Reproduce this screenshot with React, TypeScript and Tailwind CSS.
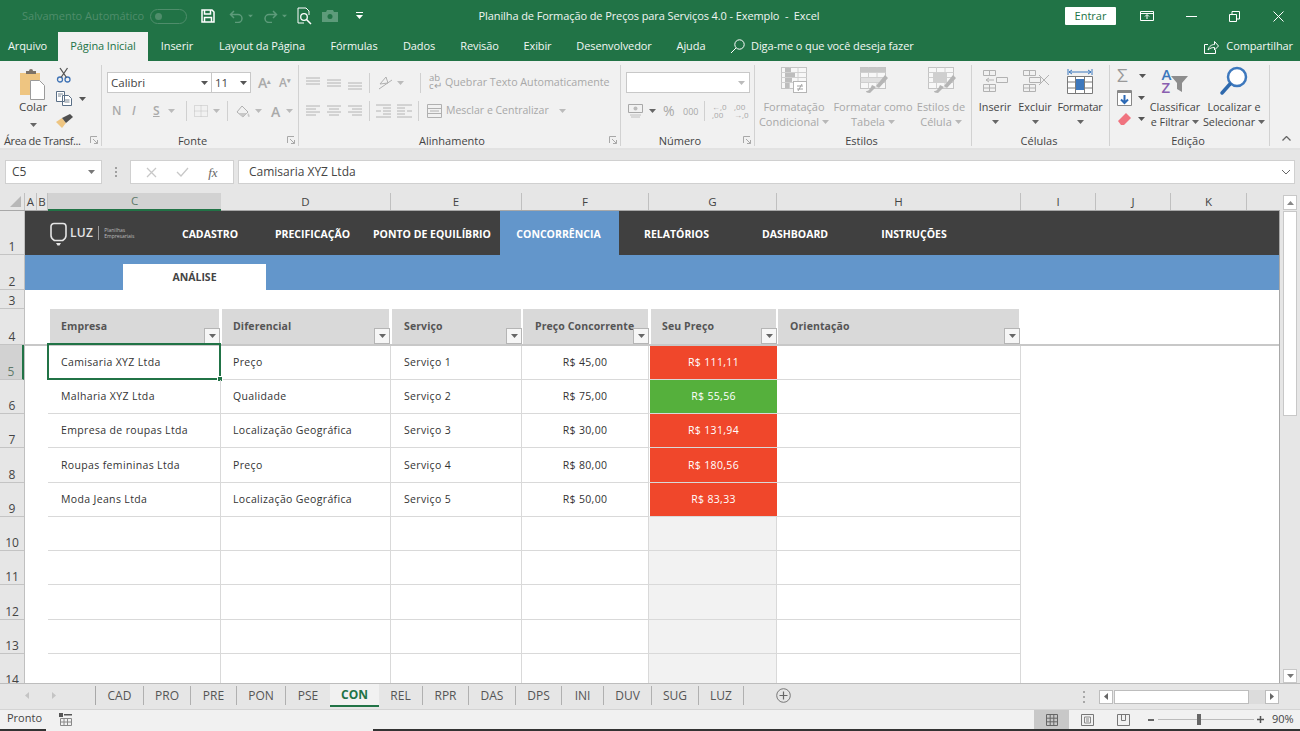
import React from "react";

const G = "#b4b4b4";
const Caret = ({ c = "#8a8a8a", className = "" }: { c?: string; className?: string }) => (
  <svg width="7" height="4" viewBox="0 0 7 4" className={className}><path d="M0 0h7L3.5 4z" fill={c} /></svg>
);
const Launcher = () => (
  <svg width="8" height="8" viewBox="0 0 8 8" className="shrink-0"><path d="M.5 7V.5H7M7.5 7.5L3 3M7.5 4v3.5H4" fill="none" stroke="#a8a8a8" /></svg>
);
const VSep = ({ h = "h-[20px]" }: { h?: string }) => <div className={`w-px bg-[#d0d0d0] ${h}`} />;

const Lines = ({ rows, c = G }: { rows: number[][]; c?: string }) => (
  <svg width="15" height="14" viewBox="0 0 15 14">
    {rows.map((r, i) => <path key={i} d={`M${r[0]} ${r[2]}H${r[1]}`} stroke={c} strokeWidth="1" />)}
  </svg>
);

const TableIcon = ({ accent }: { accent: "cond" | "table" | "style" }) => (
  <svg width="32" height="28" viewBox="0 0 32 28">
    <rect x="3.5" y="1.5" width="25" height="21" fill="#f7f7f7" stroke="#c4c4c4" />
    <path d="M3.5 6.5h25M3.5 11.5h25M3.5 16.5h25M11.5 1.5v21M20 1.5v21" stroke="#d0d0d0" />
    {accent === "cond" && (
      <>
        <path d="M7 2h6v4h-6zM7 7h10v4H7zM7 12h7v4H7zM7 17h4v5H7z" fill="#bdbdbd" />
        <rect x="15.5" y="15.5" width="13" height="11" fill="#fff" stroke="#b5b5b5" />
        <path d="M19 20h6M19 23h6M24 18l-4 7" stroke="#a2a2a2" />
      </>
    )}
    {accent === "table" && (
      <>
        <path d="M4 2h24v4H4z" fill="#c6c6c6" />
        <path d="M4 12h24v4H4z" fill="#e0e0e0" />
        <path d="M31 12l-9 10-3-2 9-11zM19 21l-6 6c-3 0-4-1-4-2 3 0 4-2 6-6z" fill="#b5b5b5" />
      </>
    )}
    {accent === "style" && (
      <>
        <path d="M8 7h14v10H8z" fill="#cfcfcf" />
        <path d="M31 12l-9 10-3-2 9-11zM19 21l-6 6c-3 0-4-1-4-2 3 0 4-2 6-6z" fill="#b5b5b5" />
      </>
    )}
  </svg>
);

const Group = ({ w, label, launcher, children, labelClass = "" }: { w: string; label: string; launcher?: boolean; children: React.ReactNode; labelClass?: string }) => (
  <div className={`${w} shrink-0 h-[81px] border-r border-[#d2d2d2] flex flex-col`}>
    <div className="h-[69px] flex">{children}</div>
    <div className="flex-1 flex items-center justify-between pr-[3px]">
      <span className={`text-[11px] text-[#444] leading-none flex-1 text-center ${labelClass}`}>{label}</span>
      {launcher && <Launcher />}
    </div>
  </div>
);

const BigBtn = ({ w, icon, l1, l2, muted }: { w: string; icon: React.ReactNode; l1: string; l2: string; muted?: boolean }) => (
  <div className={`${w} flex flex-col items-center shrink-0 ${muted ? "text-[#a8a8a8]" : "text-[#444]"}`}>
    <div className="h-[34px] pt-[1px] flex items-start justify-center">{icon}</div>
    <div className="text-[11px] leading-[15px] whitespace-nowrap">{l1}</div>
    <div className="text-[11px] leading-[15px] whitespace-nowrap flex items-center justify-center gap-[3px] h-[15px]">
      {l2}<Caret c={muted ? "#b8b8b8" : "#666"} />
    </div>
  </div>
);

const Ribbon = () => (
  <div className="h-[89px] bg-[#f1f1f1] border-b-2 border-[#e2e2e2] flex pt-[4px] shrink-0">
    <Group w="w-[102px]" label="Área de Transf..." launcher labelClass="text-left pl-[4px] tracking-[-0.4px]">
      <div className="w-[56px] flex flex-col items-center text-[#444] pl-[10px]">
        <svg width="30" height="32" viewBox="0 0 30 32" className="mt-[3px]">
          <path d="M2 5h20v22H2z" fill="#eec581" />
          <path d="M8 5V3h3a2 2 0 0 1 4 0h3v3H8z" fill="#7b7166" />
          <path d="M12.5 12.5h9l5 5v14h-14z" fill="#fff" stroke="#9b9b9b" />
        </svg>
        <div className="text-[11.5px] leading-none mt-[1px]">Colar</div>
        <Caret c="#666" className="mt-[10px]" />
      </div>
      <div className="flex flex-col pt-[2px] gap-[8px]">
        <svg width="16" height="16" viewBox="0 0 16 16">
          <circle cx="4" cy="12.5" r="2.5" fill="none" stroke="#3f73b5" strokeWidth="1.3" />
          <circle cx="11.5" cy="12.5" r="2.5" fill="none" stroke="#3f73b5" strokeWidth="1.3" />
          <path d="M5 10.5L11.5 1M10.5 10.5L4 1" stroke="#555" strokeWidth="1.3" />
        </svg>
        <div className="flex items-center gap-[7px]">
          <svg width="16" height="15" viewBox="0 0 16 15" fill="#fff" stroke="#5a6f86">
            <path d="M.5.5h8v10h-8zM6.5 4.5h6l3 3v7h-9z" />
            <path d="M2 3h5M2 5h3M8.500 9h5M8.500 11h5" stroke="#7b8794" />
          </svg>
          <Caret c="#555" />
        </div>
        <svg width="17" height="15" viewBox="0 0 17 15">
          <path d="M0 8l6 6 4-5-4-5z" fill="#eec581" />
          <path d="M6 4l4 5 7-6-3-3z" fill="#4f4f4f" />
        </svg>
      </div>
    </Group>

    <Group w="w-[197px]" label="Fonte" launcher labelClass="pr-[4px]">
      <div className="flex flex-col pl-[5px] pt-[7px]">
        <div className="flex items-center h-[21px]">
          <div className="w-[105px] h-full bg-white border border-[#c8c8c8] flex items-center justify-between px-[3px] text-[11.5px] text-[#444]">Calibri<Caret c="#555" /></div>
          <div className="w-[39px] h-full bg-white border border-l-0 border-[#c8c8c8] flex items-center justify-between px-[3px] text-[11.5px] text-[#444]">11<Caret c="#555" /></div>
          <span className="ml-[7px] w-[21px] text-[14px] leading-none text-[#aaa] font-semibold">A<sup className="text-[7px]">▴</sup></span>
          <span className="w-[18px] text-[12px] leading-none text-[#aaa] font-semibold">A<sup className="text-[7px]">▾</sup></span>
        </div>
        <div className="flex items-center h-[22px] mt-[7px] pl-[5px] text-[#aaa] font-semibold">
          <span className="w-[20px] text-[12px]">N</span>
          <span className="w-[21px] text-[12px] italic">I</span>
          <span className="w-[15px] text-[12px] underline">S</span>
          <Caret c="#bbb" />
          <div className="w-[11px]" /><VSep />
          <svg width="16" height="14" viewBox="0 0 16 14" className="ml-[6px]"><path d="M1.500 1.500h13v11h-13zM8 1.500v11M1.500 7h13" fill="none" stroke="#c0c0c0" strokeDasharray="1 1" /></svg>
          <Caret c="#bbb" className="ml-[4px]" />
          <div className="w-[7px]" /><VSep />
          <svg width="16" height="15" viewBox="0 0 16 15" className="ml-[7px]"><path d="M2 8l5-6 6 6-5 5z" fill="none" stroke="#b0b0b0" /><path d="M13 9c2 2 2 4 1 4s-2-2-1-4zM3 9h9l-4 4z" fill="#c8c8c8" /></svg>
          <Caret c="#bbb" className="ml-[4px]" />
          <span className="ml-[9px] w-[14px] text-[14px]">A</span>
          <Caret c="#bbb" className="ml-[1px]" />
        </div>
      </div>
    </Group>

    <Group w="w-[322px]" label="Alinhamento" launcher labelClass="pr-[4px]">
      <div className="flex flex-col pl-[7px] pt-[7px]">
        <div className="flex items-center h-[21px] gap-[6px]">
          <Lines rows={[[0, 14, 2], [0, 14, 5], [0, 14, 8]]} />
          <Lines rows={[[0, 14, 4], [0, 14, 7], [0, 14, 10]]} />
          <Lines rows={[[0, 14, 7], [0, 14, 10], [0, 14, 13]]} />
          <VSep />
          <svg width="16" height="15" viewBox="0 0 16 15" className="ml-[1px]"><path d="M3 9l6-7 2 6zM2 14L15 5" fill="none" stroke="#b0b0b0" /></svg>
          <Caret c="#bbb" className="ml-[-2px]" />
          <div className="w-[4px]" /><VSep />
          <div className="flex items-center gap-[3px] ml-[2px]">
            <span className="text-[9.5px] leading-[8px] text-[#a0a0a0] w-[13px] whitespace-nowrap">ab<br />c↵</span>
            <span className="text-[10.7px] text-[#a8a8a8] whitespace-nowrap">Quebrar Texto Automaticamente</span>
          </div>
        </div>
        <div className="flex items-center h-[22px] mt-[7px] gap-[6px]">
          <Lines rows={[[0, 14, 2], [0, 10, 5], [0, 14, 8], [0, 10, 11]]} />
          <Lines rows={[[0, 14, 2], [2, 12, 5], [0, 14, 8], [2, 12, 11]]} />
          <Lines rows={[[0, 14, 2], [4, 14, 5], [0, 14, 8], [4, 14, 11]]} />
          <VSep />
          <Lines rows={[[0, 15, 1], [7, 15, 4], [0, 5, 7], [7, 15, 7], [7, 15, 10], [0, 15, 13]]} />
          <Lines rows={[[0, 15, 1], [0, 8, 4], [0, 8, 7], [10, 15, 7], [0, 8, 10], [0, 15, 13]]} />
          <VSep />
          <div className="flex items-center gap-[4px] ml-[2px]">
            <svg width="15" height="14" viewBox="0 0 15 14"><path d="M.5.500h14v13H.5zM.5 4.500h14M.5 9.500h14M3 7h9" fill="none" stroke="#b0b0b0" /></svg>
            <span className="text-[10.5px] text-[#a8a8a8] whitespace-nowrap">Mesclar e Centralizar</span>
            <Caret c="#bbb" className="ml-[6px]" />
          </div>
        </div>
      </div>
    </Group>

    <Group w="w-[134px]" label="Número" launcher labelClass="pr-[4px]">
      <div className="flex flex-col pl-[5px] pt-[7px]">
        <div className="w-[124px] h-[21px] bg-white border border-[#c8c8c8] flex items-center justify-end px-[4px]"><Caret c="#bbb" /></div>
        <div className="flex items-center h-[22px] mt-[7px] pl-[2px] text-[#a8a8a8]">
          <svg width="16" height="14" viewBox="0 0 16 14"><path d="M.5.500h14v8H.5z" fill="none" stroke="#a8a8a8" /><circle cx="7.500" cy="4.500" r="2" fill="#bbb" /><path d="M2 11h11M3 13h9" stroke="#c0c0c0" /></svg>
          <Caret c="#666" className="ml-[5px]" />
          <span className="ml-[7px] text-[14px] w-[20px] leading-none">%</span>
          <span className="text-[9px] w-[20px] leading-none">000</span>
          <div className="w-[1px]" /><VSep />
          <span className="ml-[7px] text-[8px] leading-[8px] w-[22px] whitespace-nowrap">←,0<br />,00</span>
          <span className="text-[8px] leading-[8px] w-[14px] whitespace-nowrap">,00<br />→,0</span>
        </div>
      </div>
    </Group>

    <Group w="w-[217px]" label="Estilos">
      <BigBtn muted w="w-[78px]" icon={<TableIcon accent="cond" />} l1="Formatação" l2="Condicional" />
      <BigBtn muted w="w-[80px]" icon={<TableIcon accent="table" />} l1="Formatar como" l2="Tabela" />
      <BigBtn muted w="w-[56px]" icon={<TableIcon accent="style" />} l1="Estilos de" l2="Célula" />
    </Group>

    <Group w="w-[138px]" label="Células">
      <div className="w-[4px]" />
      {[
        { w: "w-[38px]", l: "Inserir", d: "M2.500 1.500h12v5h-12zM8.500 1.500v5M2.500 15.500h12v7h-12zM8.500 15.500v7M2.500 19h12M5 11h8M5 11l3-2M5 11l3 2M15.500 8.500h11v5h-11z" },
        { w: "w-[42px]", l: "Excluir", d: "M2.500 1.500h12v5h-12zM8.500 1.500v5M2.500 15.500h12v7h-12zM8.500 15.500v7M2.500 19h12M8.500 8.500h11v5h-11zM18 6l10 10M28 6L18 16" },
      ].map((b) => (
        <div key={b.l} className={`${b.w} flex flex-col items-center shrink-0 text-[#444]`}>
          <div className="h-[34px] pt-[4px]">
            <svg width="29" height="25" viewBox="0 0 29 25"><path d={b.d} fill="none" stroke="#b2b2b2" /></svg>
          </div>
          <div className="text-[10.8px] leading-[15px]">{b.l}</div>
          <div className="h-[15px] flex items-center"><Caret c="#666" /></div>
        </div>
      ))}
      <div className="w-[48px] flex flex-col items-center shrink-0 text-[#444]">
        <div className="h-[34px] pt-[2px]">
          <svg width="28" height="29" viewBox="0 0 28 29">
            <path d="M2 2v6M26 2v6M3 5h22M3 5l3-2M3 5l3 2M25 5l-3-2M25 5l-3 2" stroke="#3d78bd" fill="none" />
            <path d="M1.500 9.500h25v17h-25zM9.500 9.500v17M18.500 9.500v17M1.500 15h25M1.500 21h25" fill="#fff" stroke="#7a7a7a" />
            <rect x="10" y="12" width="8" height="11" fill="#3d78bd" />
          </svg>
        </div>
        <div className="text-[10.8px] leading-[15px] tracking-[-0.2px]">Formatar</div>
        <div className="h-[15px] flex items-center"><Caret c="#666" /></div>
      </div>
    </Group>

    <Group w="w-[160px]" label="Edição">
      <div className="w-[37px] flex flex-col pl-[7px] pt-[2px] gap-[6px] shrink-0">
        <div className="flex items-center gap-[4px]">
          <span className="w-[18px] text-[19px] leading-[17px] text-[#999]">Σ</span><Caret c="#555" />
        </div>
        <div className="flex items-center gap-[4px]">
          <svg width="15" height="16" viewBox="0 0 15 16">
            <path d="M.5.500h14v15H.5z" fill="#fff" stroke="#888" /><path d="M.5 1h14v2H.5z" fill="#888" />
            <path d="M7.500 5v8M4 9.500l3.500 3.500L11 9.500" fill="none" stroke="#2c69b5" strokeWidth="2" />
          </svg>
          <Caret c="#555" className="ml-[2px]" />
        </div>
        <div className="flex items-center gap-[4px]">
          <svg width="15" height="14" viewBox="0 0 15 14" className="mr-[2px]"><path d="M1 9l8-8 5 5-7 7H4z" fill="#f0737f" /></svg>
          <Caret c="#555" />
        </div>
      </div>
      <div className="w-[56px] flex flex-col items-center shrink-0 text-[#444]">
        <div className="h-[34px] flex items-start pt-[3px]">
          <div className="flex flex-col text-[15px] leading-[13px] font-semibold">
            <span className="text-[#3d78bd]">A</span>
            <span className="text-[#8a5fb0]">Z</span>
          </div>
          <svg width="17" height="18" viewBox="0 0 17 18" className="mt-[7px]">
            <path d="M0 1h17l-6 7v9l-5-3V8z" fill="#8d8d8d" />
          </svg>
        </div>
        <div className="text-[10.8px] leading-[15px]">Classificar</div>
        <div className="text-[10.8px] leading-[15px] flex items-center gap-[3px] whitespace-nowrap">e Filtrar<Caret c="#666" /></div>
      </div>
      <div className="w-[62px] flex flex-col items-center shrink-0 text-[#444]">
        <div className="h-[34px] pt-[1px]">
          <svg width="30" height="30" viewBox="0 0 30 30">
            <circle cx="18" cy="11" r="9" fill="#fff" stroke="#3d78bd" strokeWidth="2.500" />
            <path d="M11 18L3 27" stroke="#2e69ad" strokeWidth="3.500" strokeLinecap="round" />
          </svg>
        </div>
        <div className="text-[10.8px] leading-[15px] whitespace-nowrap">Localizar e</div>
        <div className="text-[10.8px] leading-[15px] flex items-center gap-[3px] whitespace-nowrap">Selecionar<Caret c="#666" /></div>
      </div>
    </Group>

    <div className="flex-1 flex items-end justify-end pr-[9px] pb-[7px]">
      <svg width="9" height="5" viewBox="0 0 9 5"><path d="M.5 4.500l4-4 4 4" fill="none" stroke="#666" strokeWidth="1.300" /></svg>
    </div>
  </div>
);

const TitleBar = () => (
  <div className="h-[32px] bg-[#217346] flex items-center shrink-0 relative text-white">
    <span className="ml-[22px] w-[128px] text-[11px] text-[#4f8d6b] whitespace-nowrap">Salvamento Automático</span>
    <div className="w-[37px] h-[15px] rounded-full border border-[#4f8d6b] flex items-center pl-[4px]"><div className="w-[7px] h-[7px] rounded-full bg-[#4f8d6b]" /></div>
    <svg width="14" height="14" viewBox="0 0 14 14" className="ml-[14px]"><path d="M1 1h10l2 2v10H1z" fill="none" stroke="#fff" strokeWidth="1.500" /><path d="M3.500 1v4h6V1M3.500 13V8.500h7V13" fill="none" stroke="#fff" strokeWidth="1.500" /></svg>
    <svg width="15" height="13" viewBox="0 0 15 13" className="ml-[14px]"><path d="M5 1L1.500 4.500 5 8M2 4.500h7a4 4 0 0 1 0 8H6" fill="none" stroke="#5d9b7a" strokeWidth="1.500" /></svg>
    <Caret c="#5d9b7a" className="ml-[3px] scale-75" />
    <svg width="15" height="13" viewBox="0 0 15 13" className="ml-[9px]"><path d="M10 1l3.500 3.500L10 8M13 4.500H6a4 4 0 0 0 0 8h3" fill="none" stroke="#5d9b7a" strokeWidth="1.500" /></svg>
    <Caret c="#5d9b7a" className="ml-[3px] scale-75" />
    <svg width="15" height="18" viewBox="0 0 15 18" className="ml-[9px]"><path d="M1 1h8l3 3v4M1 1v15h6" fill="none" stroke="#fff" /><circle cx="7" cy="10" r="3.300" fill="none" stroke="#fff" strokeWidth="1.300" /><path d="M9.500 12.500L14 17" stroke="#fff" strokeWidth="1.500" /></svg>
    <svg width="16" height="12" viewBox="0 0 16 12" className="ml-[10px]"><path d="M0 2h4l1-2h6l1 2h4v10H0z" fill="#5d9b7a" /><circle cx="8" cy="6.500" r="2.500" fill="#217346" /></svg>
    <svg width="7" height="8" viewBox="0 0 7 8" className="ml-[18px]"><path d="M0 .5h7" stroke="#fff" /><path d="M0 3h7L3.500 7z" fill="#fff" /></svg>
    <div className="absolute left-0 right-0 top-0 h-[32px] flex items-center justify-center pointer-events-none pr-[2px] text-[11px] tracking-[-0.1px] text-[#f0f5f2] whitespace-pre">Planilha de Formação de Preços para Serviços 4.0 - Exemplo  -  Excel</div>
    <div className="ml-auto flex items-center">
      <div className="w-[51px] h-[18px] bg-white text-[#217346] text-[11px] flex items-center justify-center rounded-[1px]">Entrar</div>
      <svg width="14" height="10" viewBox="0 0 14 10" className="ml-[24px]"><path d="M.5.500h13v9H.5zM.5 2.500h13M7 8V4M5 5.500l2-2 2 2" fill="none" stroke="#fff" /></svg>
      <div className="ml-[32px] w-[11px] h-px bg-white" />
      <svg width="11" height="11" viewBox="0 0 11 11" className="ml-[32px]"><path d="M.5 3.500h7v7h-7zM3 3V.5h7.500V8H8" fill="none" stroke="#fff" /></svg>
      <svg width="11" height="11" viewBox="0 0 11 11" className="ml-[33px] mr-[16px]"><path d="M.5.500l10 10M10.500.500l-10 10" stroke="#fff" /></svg>
    </div>
  </div>
);

const tabsTop = [
  ["Inserir", "w-[58px]"], ["Layout da Página", "w-[112px]"], ["Fórmulas", "w-[72px]"], ["Dados", "w-[58px]"], ["Revisão", "w-[63px]"], ["Exibir", "w-[53px]"], ["Desenvolvedor", "w-[100px]"], ["Ajuda", "w-[54px]"],
];

const MenuBar = () => (
  <div className="h-[29px] bg-[#217346] flex items-end text-[11px] tracking-[-0.1px] text-[#f2f7f4] shrink-0">
    <div className="w-[55px] h-full flex items-center justify-center">Arquivo</div>
    <div className="ml-[3px] w-[90px] h-[29px] bg-[#f1f1f1] text-[#217346] flex items-center justify-center">Página Inicial</div>
    {tabsTop.map(([t, w]) => <div key={t} className={`${w} h-full flex items-center justify-center whitespace-nowrap`}>{t}</div>)}
    <div className="h-full flex items-center ml-[12px] gap-[6px]">
      <svg width="15" height="15" viewBox="0 0 15 15"><circle cx="9.500" cy="5.500" r="4.700" fill="none" stroke="#fff" /><path d="M6 9l-5 5" stroke="#fff" /></svg>
      <span className="whitespace-nowrap">Diga-me o que você deseja fazer</span>
    </div>
    <div className="h-full flex items-center ml-auto gap-[7px] pr-[7px]">
      <svg width="15" height="14" viewBox="0 0 15 14"><path d="M4 4.500H.5v9h11V10M4 10c1-4 4-5.500 6.500-5.500V1.500L14.500 6l-4 4V7.500C8 7.500 6 8 4 10z" fill="none" stroke="#fff" /></svg>
      <span>Compartilhar</span>
    </div>
  </div>
);

const FormulaBar = () => (
  <div className="h-[43px] bg-[#e6e6e6] flex items-center pl-[5px] pr-[5px] pt-[1px] shrink-0">
    <div className="w-[97px] h-[24px] bg-white border border-[#d0d0d0] flex items-center justify-between px-[6px] text-[12px] text-[#444]">C5<Caret c="#777" /></div>
    <div className="w-[28px] flex flex-col items-center gap-[2px]">
      {[0, 1, 2].map((i) => <div key={i} className="w-[2px] h-[2px] bg-[#a0a0a0]" />)}
    </div>
    <div className="w-[104px] h-[24px] bg-white border border-[#d0d0d0] flex items-center justify-around px-[6px]">
      <svg width="11" height="11" viewBox="0 0 11 11"><path d="M1 1l9 9M10 1l-9 9" stroke="#c8c8c8" strokeWidth="1.300" /></svg>
      <svg width="13" height="10" viewBox="0 0 13 10"><path d="M1 5l4 4 7-8" fill="none" stroke="#c8c8c8" strokeWidth="1.300" /></svg>
      <span className="font-['Liberation_Serif',serif] italic text-[13px] leading-none text-[#666]">fx</span>
    </div>
    <div className="ml-[4px] flex-1 h-[24px] bg-white border border-[#d0d0d0] flex items-center justify-between px-[10px] pr-[3px] text-[12px] text-[#444]">
      Camisaria XYZ Ltda
      <svg width="10" height="6" viewBox="0 0 10 6"><path d="M1 1l4 4 4-4" fill="none" stroke="#666" /></svg>
    </div>
  </div>
);

const cols = [
  ["A", "w-[12px]"], ["B", "w-[11px]"], ["C", "w-[173px]"], ["D", "w-[170px]"], ["E", "w-[131px]"], ["F", "w-[127px]"], ["G", "w-[128px]"], ["H", "w-[244px]"], ["I", "w-[75px]"], ["J", "w-[75px]"], ["K", "w-[76px]"],
];

const ColHeader = () => (
  <div className="h-[18px] flex bg-[#e6e6e6] border-b border-[#a8a8a8] shrink-0 text-[11.5px] text-[#444]">
    <div className="w-[25px] flex items-end justify-end pr-[3px] pb-[3px] border-r border-[#c0c0c0]">
      <svg width="11" height="11" viewBox="0 0 11 11"><path d="M11 0v11H0z" fill="#b8b8b8" /></svg>
    </div>
    {cols.map(([c, w]) => (
      <div key={c} className={`${w} flex items-center justify-center shrink-0 ${c === "C" ? "bg-[#d2d2d2] border-b-2 border-[#217346] h-[18px] text-[#5f7a6a]" : "border-r border-[#c0c0c0]"}`}>{c}</div>
    ))}
  </div>
);

const rowsH = [
  ["1", "h-[44px]"], ["2", "h-[35px]"], ["3", "h-[19px]"], ["4", "h-[36px]"], ["5", "h-[35px]"], ["6", "h-[34px]"], ["7", "h-[34px]"], ["8", "h-[35px]"], ["9", "h-[34px]"], ["10", "h-[34px]"], ["11", "h-[34px]"], ["12", "h-[35px]"], ["13", "h-[34px]"], ["14", "h-[34px]"],
];

const RowHeader = () => (
  <div className="w-[25px] shrink-0 bg-[#e6e6e6] flex flex-col border-r border-[#c0c0c0] text-[12px] text-[#444]">
    {rowsH.map(([r, h]) => (
      <div key={r} className={`${h} shrink-0 flex items-end justify-center border-b border-[#c4c4c4] leading-[15px] ${r === "5" ? "bg-[#d2d2d2] border-r-2 border-r-[#217346] text-[#5f7a6a]" : ""}`}>{r}</div>
    ))}
  </div>
);

const nav = [
  ["CADASTRO", "w-[106px] pr-[2px]"], ["PRECIFICAÇÃO", "w-[100px] pr-[3px]"], ["PONTO DE EQUILÍBRIO", "w-[136px]"], ["CONCORRÊNCIA", "w-[119px] bg-[#6396cb] pr-[2px]"], ["RELATÓRIOS", "w-[118px] pr-[3px]"], ["DASHBOARD", "w-[119px] pr-[3px]"], ["INSTRUÇÕES", "w-[119px] pr-[3px]"],
];

const headers = [
  { t: "Empresa", w: "w-[173px] pl-[2px] pr-[2px]", a: "pl-[11px]" },
  { t: "Diferencial", w: "w-[170px] pl-[1px] pr-[2px]", a: "pl-[11px]" },
  { t: "Serviço", w: "w-[131px] pl-[1px] pr-[1px]", a: "pl-[12px]" },
  { t: "Preço Concorrente", w: "w-[127px] pl-[1px] pr-[1px]", a: "pl-[12px]" },
  { t: "Seu Preço", w: "w-[128px] pl-[2px] pr-[1px]", a: "pl-[11px]" },
  { t: "Orientação", w: "w-[244px] pl-[1px] pr-[2px]", a: "pl-[12px]" },
];

const data = [
  { h: "h-[34px]", e: "Camisaria XYZ Ltda", d: "Preço", s: "Serviço 1", p: "R$ 45,00", y: "R$ 111,11", bg: "bg-[#f0472b]", sel: true },
  { h: "h-[34px]", e: "Malharia XYZ Ltda", d: "Qualidade", s: "Serviço 2", p: "R$ 75,00", y: "R$ 55,56", bg: "bg-[#55b03c]" },
  { h: "h-[34px]", e: "Empresa de roupas Ltda", d: "Localização Geográfica", s: "Serviço 3", p: "R$ 30,00", y: "R$ 131,94", bg: "bg-[#f0472b]" },
  { h: "h-[35px]", e: "Roupas femininas Ltda", d: "Preço", s: "Serviço 4", p: "R$ 80,00", y: "R$ 180,56", bg: "bg-[#f0472b]" },
  { h: "h-[34px]", e: "Moda Jeans Ltda", d: "Localização Geográfica", s: "Serviço 5", p: "R$ 50,00", y: "R$ 83,33", bg: "bg-[#f0472b]" },
];
const emptyRows = ["h-[34px]", "h-[34px]", "h-[35px]", "h-[34px]", "h-[34px]"];
const line = "border-r border-b border-[#d9d9d9]";

const Sheet = () => (
  <div className="flex-1 min-w-0 bg-white flex flex-col border-r border-[#a8a8a8] text-[10.5px] tracking-[0.35px] text-[#333]">
    <div className="h-[44px] shrink-0 bg-[#404040] flex text-white font-bold text-[10.5px] tracking-normal">
      <div className="w-[133px] pl-[25px] flex items-center gap-[3px]">
        <svg width="17" height="26" viewBox="0 0 17 26" className="mt-[1px]"><path d="M4 2.500h9a3 3 0 0 1 3 3v9c0 3-2 4-3.500 5h-8C3 18.500 1 17.500 1 14.500v-9a3 3 0 0 1 3-3z" fill="none" stroke="#e5e5e5" strokeWidth="1.600" /><path d="M6 22h5l-1.500 2.500h-2z" fill="#e5e5e5" /></svg>
        <span className="text-[12px] font-semibold tracking-[0.3px] text-[#e5e5e5] leading-none">LUZ</span>
        <div className="w-px h-[14px] bg-[#999] mx-[2px]" />
        <span className="text-[5px] leading-[6px] font-normal text-[#bbb]">Planilhas<br />Empresariais</span>
      </div>
      {nav.map(([t, w]) => <div key={t} className={`${w} shrink-0 flex items-center justify-center whitespace-nowrap pt-[3px]`}>{t}</div>)}
    </div>
    <div className="h-[35px] shrink-0 bg-[#6396cb] flex items-end pl-[98px]">
      <div className="w-[143px] h-[26px] bg-white flex items-center justify-center font-bold text-[#444] text-[10.5px] tracking-normal pt-[2px]">ANÁLISE</div>
    </div>
    <div className="h-[19px] shrink-0" />
    <div className="h-[37px] shrink-0 flex border-b-2 border-[#c8c8c8] pl-[23px]">
      {headers.map((c) => (
        <div key={c.t} className={`${c.w} shrink-0`}>
          <div className={`relative h-full bg-[#d9d9d9] ${c.a} font-bold text-[#555] pt-[9px] leading-[16px] whitespace-nowrap tracking-[0.1px]`}>
            {c.t}
            <div className="absolute right-[-1px] bottom-0 w-[16px] h-[16px] bg-[#f6f6f6] border border-[#b5b5b5] flex items-center justify-center">
              <Caret c="#666" />
            </div>
          </div>
        </div>
      ))}
    </div>
    {data.map((r) => (
      <div key={r.e} className={`${r.h} shrink-0 flex pl-[23px]`}>
        <div className={`w-[173px] ${line} relative pl-[13px] pt-[1px] flex items-center`}>
          {r.e}
          {r.sel && (
            <div className="absolute left-[-1px] top-[-3px] right-[-1px] bottom-[-1px] border-2 border-[#217346]">
              <div className="absolute right-[-4px] bottom-[-4px] w-[6px] h-[6px] bg-[#217346] border border-white" />
            </div>
          )}
        </div>
        <div className={`w-[170px] ${line} pl-[12px] pt-[1px] flex items-center`}>{r.d}</div>
        <div className={`w-[131px] ${line} pl-[13px] pt-[1px] flex items-center`}>{r.s}</div>
        <div className={`w-[127px] ${line} pt-[1px] flex items-center justify-center`}>{r.p}</div>
        <div className={`w-[128px] ${r.bg} text-white pt-[1px] flex items-center justify-center border-l border-b border-l-white border-b-[#d9d9d9]`}>{r.y}</div>
        <div className={`w-[244px] ${line}`} />
      </div>
    ))}
    {emptyRows.map((h, i) => (
      <div key={i} className={`${h} shrink-0 flex pl-[23px]`}>
        <div className={`w-[173px] ${line}`} />
        <div className={`w-[170px] ${line}`} />
        <div className={`w-[131px] ${line}`} />
        <div className={`w-[127px] ${line}`} />
        <div className={`w-[128px] bg-[#f2f2f2] ${line}`} />
        <div className={`w-[244px] ${line}`} />
      </div>
    ))}
  </div>
);

const VScroll = () => (
  <div className="w-[20px] shrink-0 bg-[#e6e6e6] flex flex-col items-center pt-[2px]">
    <div className="w-[14px] h-[15px] bg-white border border-[#c8c8c8] flex items-center justify-center"><svg width="7" height="4" viewBox="0 0 7 4"><path d="M0 4h7L3.500 0z" fill="#888" /></svg></div>
    <div className="w-[14px] h-[205px] bg-white border border-[#c8c8c8] mt-px" />
    <div className="flex-1" />
    <div className="w-[14px] h-[14px] bg-white border border-[#c8c8c8] flex items-center justify-center"><Caret c="#777" /></div>
  </div>
);

const sheets = [
  ["CAD", "w-[48px]"], ["PRO", "w-[47px]"], ["PRE", "w-[46px]"], ["PON", "w-[49px]"], ["PSE", "w-[44px]"], ["CON", "w-[49px]"], ["REL", "w-[44px]"], ["RPR", "w-[46px]"], ["DAS", "w-[47px]"], ["DPS", "w-[46px]"], ["INI", "w-[42px]"], ["DUV", "w-[48px]"], ["SUG", "w-[47px]"], ["LUZ", "w-[45px]"],
];

const SheetTabs = () => (
  <div className="h-[26px] bg-[#e6e6e6] border-t border-[#bdbdbd] flex items-center pb-[2px] shrink-0 text-[12px] text-[#555]">
    <div className="w-[96px] flex items-center pl-[25px] gap-[23px] border-r border-[#a8a8a8] h-[19px]">
      <svg width="4" height="7" viewBox="0 0 4 7"><path d="M4 0v7L0 3.500z" fill="#c4c4c4" /></svg>
      <svg width="4" height="7" viewBox="0 0 4 7"><path d="M0 0v7l4-3.500z" fill="#c4c4c4" /></svg>
    </div>
    {sheets.map(([s, w]) =>
      s === "CON" ? (
        <div key={s} className={`${w} h-[23px] self-start bg-[#f1f1f1] border-b-2 border-[#217346] flex items-center justify-center font-bold text-[#217346]`}>{s}</div>
      ) : (
        <div key={s} className={`${w} h-[19px] flex items-center justify-center ${s === "PSE" ? "" : "border-r border-[#b0b0b0]"}`}>{s}</div>
      )
    )}
    <svg width="15" height="15" viewBox="0 0 15 15" className="ml-[32px]"><circle cx="7.500" cy="7.500" r="6.800" fill="none" stroke="#777" /><path d="M3.500 7.500h8M7.500 3.500v8" stroke="#666" strokeWidth="1.200" /></svg>
    <div className="ml-auto flex items-center pr-[21px] pt-[2px]">
      <div className="flex flex-col gap-[3px] mr-[14px]">{[0, 1, 2].map((i) => <div key={i} className="w-[2px] h-[2px] bg-[#a8a8a8]" />)}</div>
      <div className="w-[14px] h-[14px] bg-white border border-[#bdbdbd] flex items-center justify-center"><svg width="4" height="7" viewBox="0 0 4 7"><path d="M4 0v7L0 3.500z" fill="#666" /></svg></div>
      <div className="w-[135px] h-[14px] bg-white border border-[#bdbdbd] ml-px" />
      <div className="w-[16px] h-[14px] bg-[#dcdcdc]" />
      <div className="w-[14px] h-[14px] bg-white border border-[#bdbdbd] flex items-center justify-center"><svg width="4" height="7" viewBox="0 0 4 7"><path d="M0 0v7l4-3.500z" fill="#666" /></svg></div>
    </div>
  </div>
);

const StatusBar = () => (
  <div className="h-[20px] bg-[#f1f1f1] border-t border-[#d4d4d4] flex items-center text-[11px] text-[#444] shrink-0">
    <span className="ml-[7px] w-[52px] pb-[2px]">Pronto</span>
    <svg width="13" height="13" viewBox="0 0 13 13"><path d="M0 0h4v4H0z" fill="#555" /><path d="M5 1h8v1.500H5z" fill="#555" /><path d="M1.500 5.500h11v7h-11zM5 5.500v7M8.500 5.500v7M1.500 9h11" fill="none" stroke="#888" /></svg>
    <div className="ml-auto h-full w-[35px] bg-[#c8c8c8] flex items-center justify-center">
      <svg width="12" height="12" viewBox="0 0 12 12"><path d="M.5.500h11v11H.5zM4.200.500v11M7.800.500v11M.5 4.200h11M.5 7.800h11" fill="none" stroke="#666" /></svg>
    </div>
    <svg width="13" height="12" viewBox="0 0 13 12" className="ml-[12px]"><path d="M.5.500h12v11H.5z" fill="none" stroke="#777" /><path d="M3.500 3h6v6h-6zM5 5h3M5 7h3" fill="none" stroke="#888" /></svg>
    <svg width="13" height="12" viewBox="0 0 13 12" className="ml-[23px]"><path d="M.5.500h12v11H.5zM4.500.500v6h4v-6" fill="none" stroke="#777" /></svg>
    <div className="ml-[18px] w-[6px] h-[2px] bg-[#666]" />
    <div className="relative ml-[4px] w-[96px] h-px bg-[#bbb]">
      <div className="absolute left-[39px] top-[-5px] w-[4px] h-[11px] bg-[#666]" />
    </div>
    <svg width="7" height="7" viewBox="0 0 7 7" className="ml-[3px]"><path d="M0 3.500h7M3.500 0v7" stroke="#555" strokeWidth="1.500" /></svg>
    <span className="ml-[8px] w-[28px] pb-[1px]">90%</span>
  </div>
);

export default function App() {
  return (
    <div className="w-[1300px] h-[731px] overflow-hidden flex flex-col bg-[#f1f1f1] font-['Open_Sans','Noto_Sans',sans-serif]">
      <TitleBar />
      <MenuBar />
      <Ribbon />
      <FormulaBar />
      <div className="flex flex-1 min-h-0">
        <div className="flex-1 min-w-0 flex flex-col">
          <ColHeader />
          <div className="flex h-[472px] overflow-hidden">
            <RowHeader />
            <Sheet />
          </div>
        </div>
        <VScroll />
      </div>
      <SheetTabs />
      <StatusBar />
      <div className="h-[2px] flex shrink-0">
        <div className="w-[46px] bg-[#333]" />
        <div className="w-[327px] bg-[#f1f1f1]" />
        <div className="flex-1 bg-[#333]" />
      </div>
    </div>
  );
}
